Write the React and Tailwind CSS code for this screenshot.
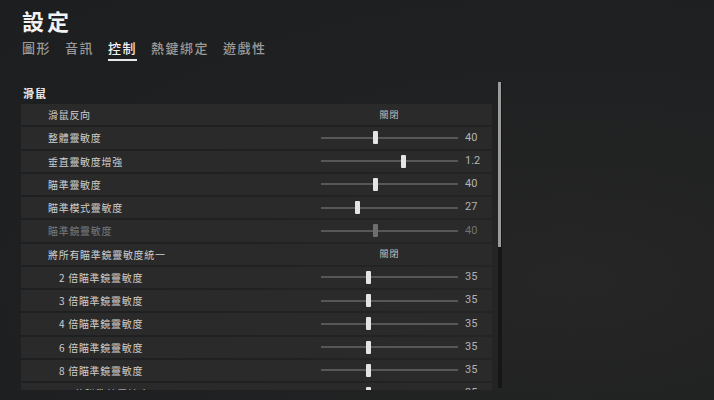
import React from 'react';

const tabs = ['圖形', '音訊', '控制', '熱鍵綁定', '遊戲性'];

const rows = [
  { label: '滑鼠反向', type: 'toggle', value: '關閉' },
  { label: '整體靈敏度', value: '40', pct: 0.4 },
  { label: '垂直靈敏度增強', value: '1.2', pct: 0.6 },
  { label: '瞄準靈敏度', value: '40', pct: 0.4 },
  { label: '瞄準模式靈敏度', value: '27', pct: 0.27 },
  { label: '瞄準鏡靈敏度', value: '40', pct: 0.4, disabled: true },
  { label: '將所有瞄準鏡靈敏度統一', type: 'toggle', value: '關閉' },
  { label: '2 倍瞄準鏡靈敏度', value: '35', pct: 0.35, sub: true },
  { label: '3 倍瞄準鏡靈敏度', value: '35', pct: 0.35, sub: true },
  { label: '4 倍瞄準鏡靈敏度', value: '35', pct: 0.35, sub: true },
  { label: '6 倍瞄準鏡靈敏度', value: '35', pct: 0.35, sub: true },
  { label: '8 倍瞄準鏡靈敏度', value: '35', pct: 0.35, sub: true },
  { label: '15 倍瞄準鏡靈敏度', value: '35', pct: 0.35, sub: true },
];

const Slider = ({ pct, disabled }) => (
  <div className="relative w-[137px] h-[14px] flex items-center">
    <div className="w-full h-[2px] bg-[#575757]" />
    <div
      className={`absolute top-[0.5px] w-[5px] h-[13px] rounded-[1px] -ml-[2.5px] ${disabled ? 'bg-[#6e6e6e]' : 'bg-[#e4e4e4]'}`}
      style={{ left: `${pct * 100}%` }}
    />
  </div>
);

const App = () => {
  return (
    <div className="w-[714px] h-[400px] overflow-hidden bg-[radial-gradient(ellipse_at_80%_70%,#262626_0%,#1f2021_55%,#1d1e1f_100%)] font-['Noto_Sans_CJK_TC','Noto_Sans',sans-serif] text-white">
      {/* Header */}
      <div className="pl-[22px] pt-[9px]">
        <h1 className="text-[22px] leading-[22px] font-bold tracking-[3px] text-[#f2f2f2]">設定</h1>
        <div className="flex gap-[14px] mt-[9px]">
          {tabs.map((t) => (
            <div
              key={t}
              className={`text-[13px] leading-[16px] tracking-[1.5px] font-medium ${t === '控制' ? 'text-[#f0f0f0] border-b-2 border-[#e8e8e8] pb-[3px]' : 'text-[#9a9a9a] pb-[5px]'}`}
            >
              {t}
            </div>
          ))}
        </div>
      </div>

      {/* Settings list */}
      <div className="flex pl-[21px] mt-[21px]">
        <div className="w-[471px] h-[308px] overflow-hidden">
          <div className="h-[22px] pl-[2px] flex items-center text-[11px] font-bold tracking-[1px] text-[#ececec]">滑鼠</div>
          <div className="flex flex-col gap-[2px]">
            {rows.map((r) => (
              <div key={r.label} className="h-[21.25px] shrink-0 bg-[#2a2a2a] flex items-center">
                <div
                  className={`flex-1 text-[10px] tracking-[0.7px] ${r.sub ? 'pl-[38px]' : 'pl-[27px]'} ${r.disabled ? 'text-[#7a7a7a]' : 'text-[#cfcfcf]'}`}
                >
                  {r.label}
                </div>
                {r.type === 'toggle' ? (
                  <div className="w-[171px] pr-[34px] text-center text-[9px] tracking-[1px] text-[#bdbdbd]">{r.value}</div>
                ) : (
                  <div className="flex items-center">
                    <Slider pct={r.pct} disabled={r.disabled} />
                    <div className={`ml-[7px] w-[27px] font-['Roboto',sans-serif] text-[11px] ${r.disabled ? 'text-[#727272]' : 'text-[#b3b3b3]'}`}>
                      {r.value}
                    </div>
                  </div>
                )}
              </div>
            ))}
          </div>
        </div>
        <div className="ml-[6px] w-[4px] h-[306px] bg-[#161616]">
          <div className="w-[3px] h-[165px] bg-[#9c9c9c]" />
        </div>
      </div>
    </div>
  );
};

export default App;
